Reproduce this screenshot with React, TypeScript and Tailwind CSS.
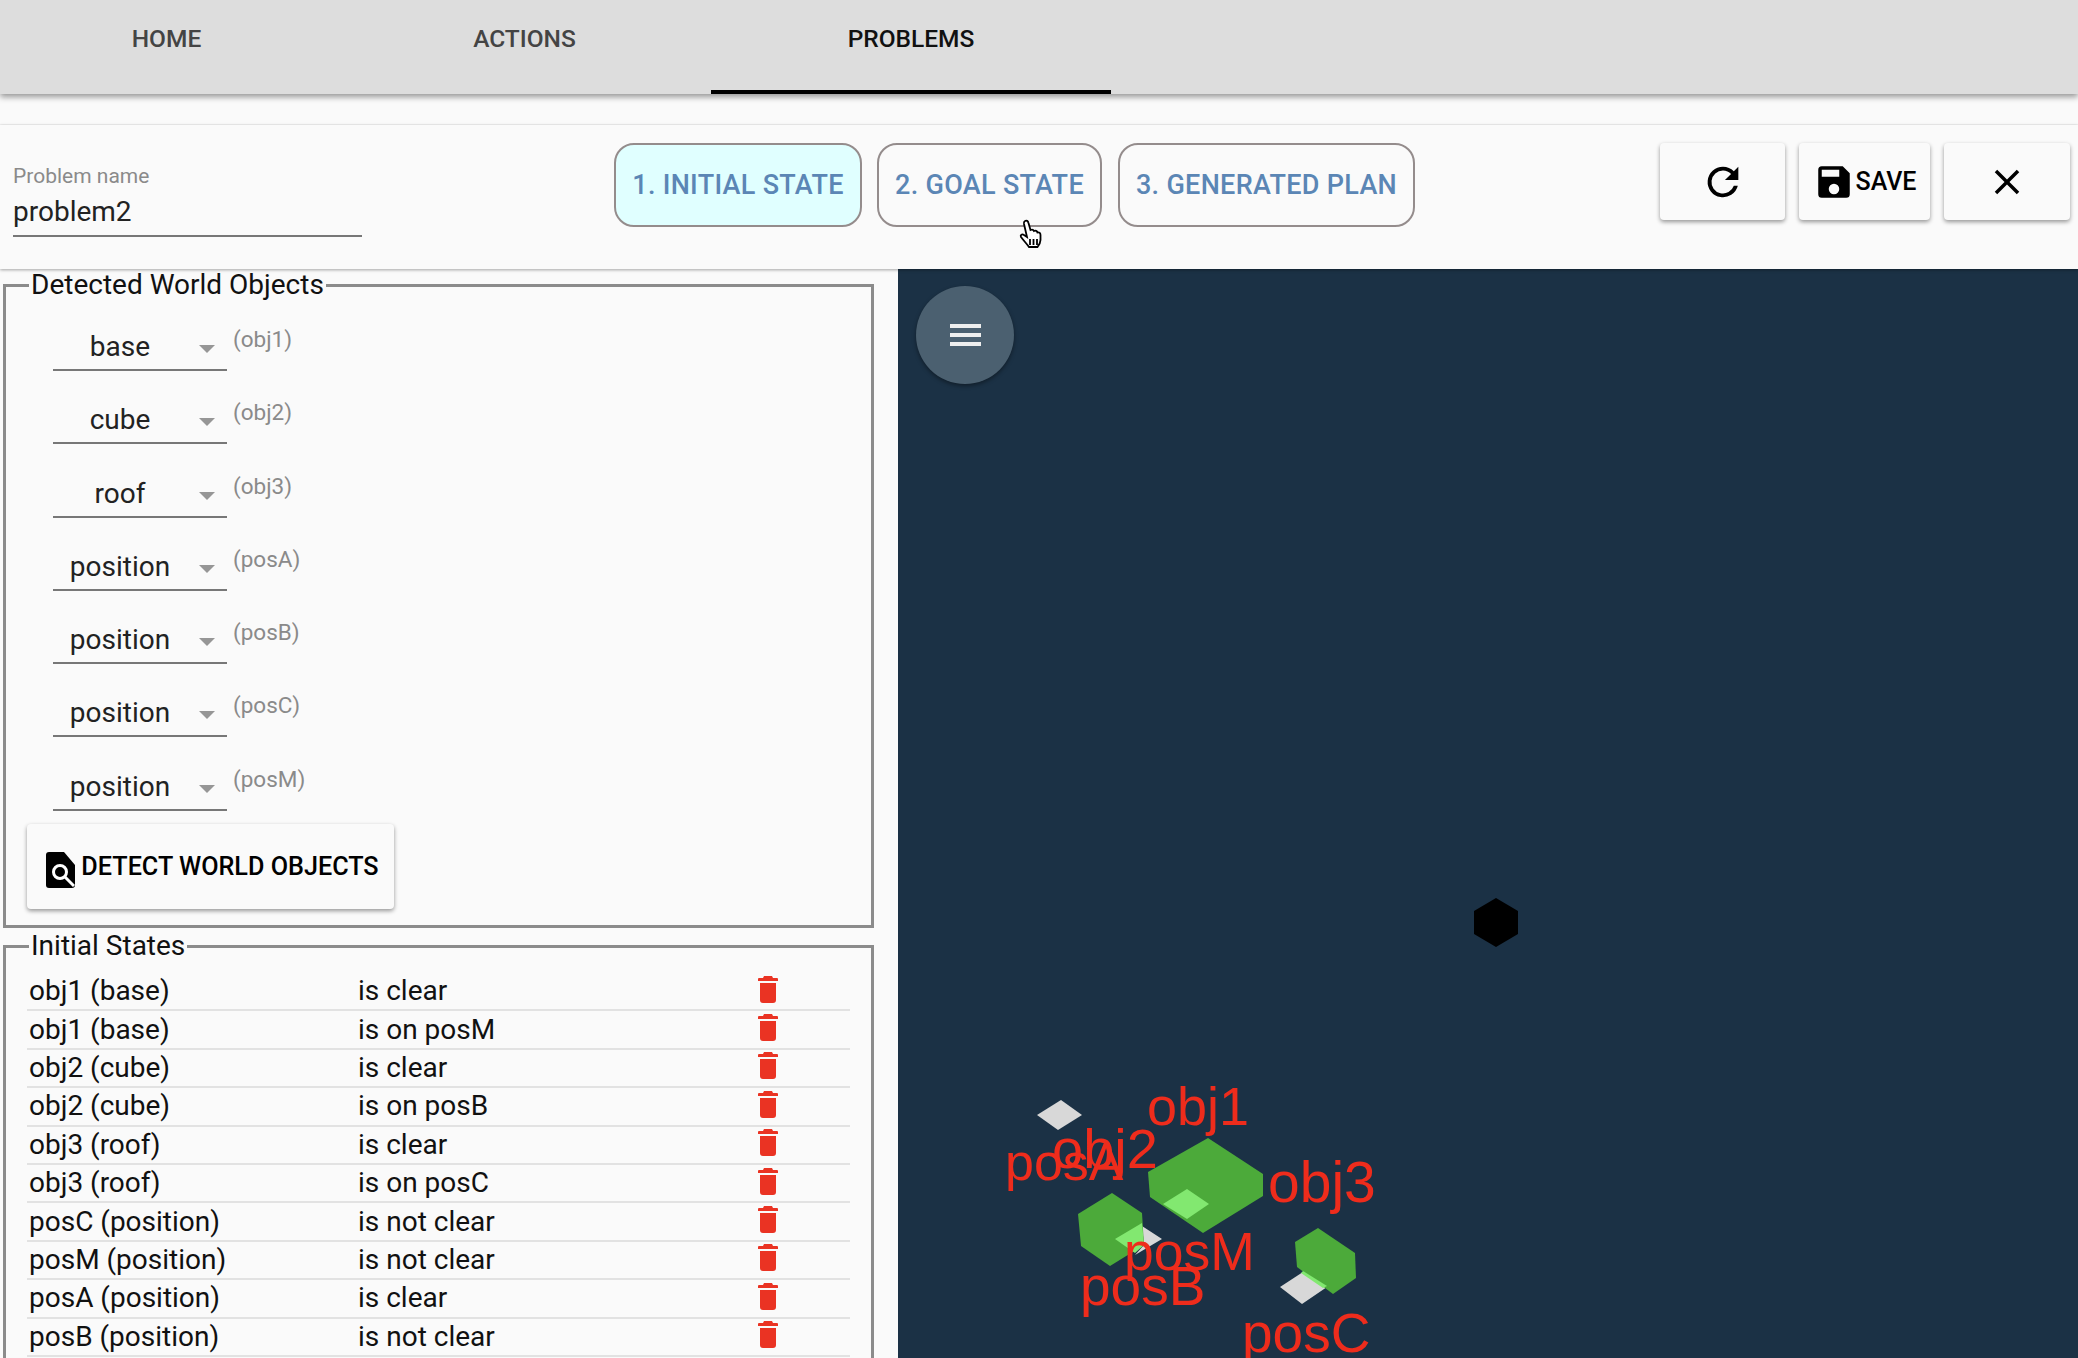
import React from 'react';

const detected = [
  { type: 'base', id: 'obj1' },
  { type: 'cube', id: 'obj2' },
  { type: 'roof', id: 'obj3' },
  { type: 'position', id: 'posA' },
  { type: 'position', id: 'posB' },
  { type: 'position', id: 'posC' },
  { type: 'position', id: 'posM' },
];

const states = [
  ['obj1 (base)', 'is clear'],
  ['obj1 (base)', 'is on posM'],
  ['obj2 (cube)', 'is clear'],
  ['obj2 (cube)', 'is on posB'],
  ['obj3 (roof)', 'is clear'],
  ['obj3 (roof)', 'is on posC'],
  ['posC (position)', 'is not clear'],
  ['posM (position)', 'is not clear'],
  ['posA (position)', 'is clear'],
  ['posB (position)', 'is not clear'],
];

const TrashIcon = () => (
  <svg className="mb-[4px]" width="20" height="27" viewBox="0 0 20 27" fill="#ea3323">
    <path d="M6 0h8l1 2h4a1 1 0 0 1 1 1v2H0V3a1 1 0 0 1 1-1h4zM2 7h16v17a3 3 0 0 1-3 3H5a3 3 0 0 1-3-3z" />
  </svg>
);

const Scene = () => (
  <svg className="absolute inset-0 h-full w-full" viewBox="898 269 1180 1089">
    <polygon points="1496,898 1518,911 1518,934 1496,947 1474,934 1474,911" fill="#000" />
    <polygon points="1061,1100 1082,1115 1058,1130 1037,1115" fill="#d8d8d8" />
    <polygon points="1208,1138 1263,1174 1263,1196 1203,1233 1150,1197 1148,1172" fill="#4caa3a" />
    <polygon points="1187,1189 1209,1204 1187,1219 1163,1204" fill="#82e870" />
    <polygon points="1142,1226 1162,1239 1135,1255 1144,1245" fill="#d8d8d8" />
    <polygon points="1112,1193 1142,1213 1144,1245 1110,1266 1081,1246 1078,1214" fill="#4caa3a" />
    <polygon points="1142,1223 1144,1245 1135,1253 1115,1239" fill="#82e870" />
    <polygon points="1303,1272 1327,1287 1302,1304 1280,1287" fill="#d8d8d8" />
    <polygon points="1318,1228 1355,1253 1356,1278 1333,1294 1297,1267 1295,1242" fill="#4caa3a" />
    <polygon points="1303,1271 1327,1286 1323,1288 1301,1273" fill="#82e870" />
    <g fill="#ee2c1c" fontFamily="'Liberation Sans', sans-serif">
      <text x="1147" y="1125" fontSize="54">obj1</text>
      <text x="1052" y="1168" fontSize="56">obj2</text>
      <text x="1005" y="1180" fontSize="52">posA</text>
      <text x="1268" y="1202" fontSize="57">obj3</text>
      <text x="1124" y="1270" fontSize="53.500">posM</text>
      <text x="1080" y="1305" fontSize="55">posB</text>
      <text x="1242" y="1352" fontSize="55">posC</text>
    </g>
  </svg>
);

export default function App() {
  return (
    <div className="flex h-[1358px] w-[2078px] flex-col overflow-hidden bg-[#fafafa] font-['Roboto',sans-serif]">
      <nav className="relative z-20 flex h-[94px] shrink-0 bg-[#dddddd] text-[24.500px] font-medium shadow-[0_3px_6px_rgba(0,0,0,0.4)]">
        <div className="w-[333px] pt-[21px] text-center text-[#444]">HOME</div>
        <div className="w-[383px] pt-[21px] text-center text-[#444]">ACTIONS</div>
        <div className="ml-[-5px] h-[94px] w-[400px] border-b-[4px] border-black pt-[21px] text-center text-[#111]">PROBLEMS</div>
      </nav>
      <div className="h-[31px] shrink-0 border-b border-[#f2f2f2]" />
      <header className="relative z-10 flex h-[144px] shrink-0 items-start shadow-[0_1px_3px_rgba(0,0,0,0.35)]">
        <div className="ml-[13px] mt-[39px] w-[349px] border-b-2 border-[#777]">
          <div className="text-[21px] leading-[24px] text-[#8a8a8a]">Problem name</div>
          <div className="pb-[4px] pt-[5px] text-[28px] leading-[38px] text-[#222]">problem2</div>
        </div>
        <div className="ml-[252px] mt-[18px] flex gap-[15px] text-[27px] font-medium tracking-[0.3px] text-[#5b86b5]">
          <div className="flex h-[84px] w-[248px] items-center justify-center rounded-[20px] border-2 border-[#948c8c] bg-[#e0ffff]">1. INITIAL STATE</div>
          <div className="flex h-[84px] w-[225px] items-center justify-center rounded-[20px] border-2 border-[#948c8c]">2. GOAL STATE</div>
          <div className="ml-[1px] flex h-[84px] w-[297px] items-center justify-center rounded-[20px] border-2 border-[#948c8c]">3. GENERATED PLAN</div>
        </div>
        <div className="ml-auto mr-[8px] mt-[18px] flex gap-[14px] text-[25px] font-medium text-black">
          <div className="flex h-[77px] w-[125px] items-center justify-center rounded-[4px] bg-[#fafafa] shadow-[0_2px_4px_rgba(0,0,0,0.4)]">
            <svg width="46" height="46" viewBox="0 0 24 24" fill="currentColor"><path d="M17.65 6.35A7.96 7.96 0 0 0 12 4a8 8 0 1 0 7.730 10h-2.080A6 6 0 1 1 12 6c1.660 0 3.140.690 4.220 1.780L13 11h7V4z" /></svg>
          </div>
          <div className="flex h-[77px] w-[131px] items-center justify-center gap-[1px] rounded-[4px] bg-[#fafafa] shadow-[0_2px_4px_rgba(0,0,0,0.4)]">
            <svg width="42" height="42" viewBox="0 0 24 24" fill="currentColor"><path d="M17 3H5a2 2 0 0 0-2 2v14a2 2 0 0 0 2 2h14a2 2 0 0 0 2-2V7zm-5 16a3 3 0 1 1 0-6 3 3 0 0 1 0 6zm3-10H5V5h10z" /></svg>
            SAVE
          </div>
          <div className="flex h-[77px] w-[126px] items-center justify-center rounded-[4px] bg-[#fafafa] shadow-[0_2px_4px_rgba(0,0,0,0.4)]">
            <svg width="42" height="42" viewBox="0 0 24 24" fill="currentColor"><path d="M19 6.410 17.590 5 12 10.590 6.410 5 5 6.410 10.590 12 5 17.590 6.410 19 12 13.410 17.590 19 19 17.590 13.410 12z" /></svg>
          </div>
        </div>
        <svg className="absolute left-[1019px] top-[94px]" width="26" height="33" viewBox="0 0 26 33" fill="#fff" stroke="#000" strokeWidth="1.800">
          <path d="M6 2c1.500-1 3 0 3.500 2l2 7c2-1 3 0 3.500 1 1.500-.8 3 0 3.500 1.500 1.500-.5 3 .5 3 2.500v5c0 3-1.500 5-3 7H10c-2-3-5-6-8-10-1-2 1-3.500 3-2l3 2L5 5c-.3-1.500 0-2.500 1-3z" />
          <path d="M11 20v6M14.500 20v6M18 20v6" />
        </svg>
      </header>
      <main className="flex min-h-0 flex-1">
        <div className="w-[898px] shrink-0 overflow-hidden pl-[3px] pr-[24px] pt-[1px]">
          <fieldset className="h-[658px] border-[3px] border-[#8b8b8b] pl-[21px]">
            <legend className="ml-[2px] px-[2px] text-[28px] leading-[30px] text-[#111]">Detected World Objects</legend>
            <div className="flex flex-col pl-[26px] pt-[13px]">
              {detected.map((d) => (
                <div key={d.id} className="flex h-[73.300px] items-start pt-[12px]">
                  <div className="relative flex h-[46px] w-[174px] items-center justify-center border-b-2 border-[#777] pr-[40px] text-[28px] text-[#222]">
                    {d.type}
                    <span className="absolute right-[12px] top-[20px] h-0 w-0 border-x-[8px] border-t-[8px] border-x-transparent border-t-[#969696]" />
                  </div>
                  <span className="ml-[6px] mt-[-2px] text-[22.500px] text-[#8a8a8a]">({d.id})</span>
                </div>
              ))}
            </div>
            <button className="mt-[-2px] flex h-[85px] w-[367px] items-center justify-center gap-[6px] rounded-[4px] bg-[#fafafa] pl-[4px] text-[25.200px] font-medium text-black shadow-[0_2px_4px_rgba(0,0,0,0.4)]">
              <svg className="mt-[6px]" width="29" height="36" viewBox="0 0 29 36">
                <path d="M3 0h15l11 13v20a3 3 0 0 1-3 3H3a3 3 0 0 1-3-3V3a3 3 0 0 1 3-3z" fill="#000" />
                <circle cx="14" cy="20" r="6.500" fill="none" stroke="#fff" strokeWidth="3" />
                <path d="m19 25 9 9" stroke="#fff" strokeWidth="3" />
              </svg>
              DETECT WORLD OBJECTS
            </button>
          </fieldset>
          <fieldset className="mt-[3px] h-[500px] border-[3px] border-[#8b8b8b] pl-[21px] pr-[21px]">
            <legend className="ml-[2px] px-[2px] text-[28px] leading-[30px] text-[#111]">Initial States</legend>
            <div className="pt-[12px]">
              {states.map(([name, state], i) => (
                <div key={i} className="flex h-[38.400px] items-center border-b-2 border-[#e2e2e2] pl-[2px] text-[28px] text-[#111]">
                  <span className="w-[329px]">{name}</span>
                  <span className="w-[400px]">{state}</span>
                  <TrashIcon />
                </div>
              ))}
            </div>
          </fieldset>
        </div>
        <div className="relative flex-1 bg-[#1b3145]">
          <Scene />
          <button className="absolute left-[18px] top-[17px] flex h-[98px] w-[98px] flex-col items-center justify-center gap-[5px] rounded-full bg-[#4b6070] shadow-[0_2px_4px_rgba(0,0,0,0.4)]">
            <span className="h-[4px] w-[31px] bg-[#eeeeee]" />
            <span className="h-[4px] w-[31px] bg-[#eeeeee]" />
            <span className="h-[4px] w-[31px] bg-[#eeeeee]" />
          </button>
        </div>
      </main>
    </div>
  );
}
